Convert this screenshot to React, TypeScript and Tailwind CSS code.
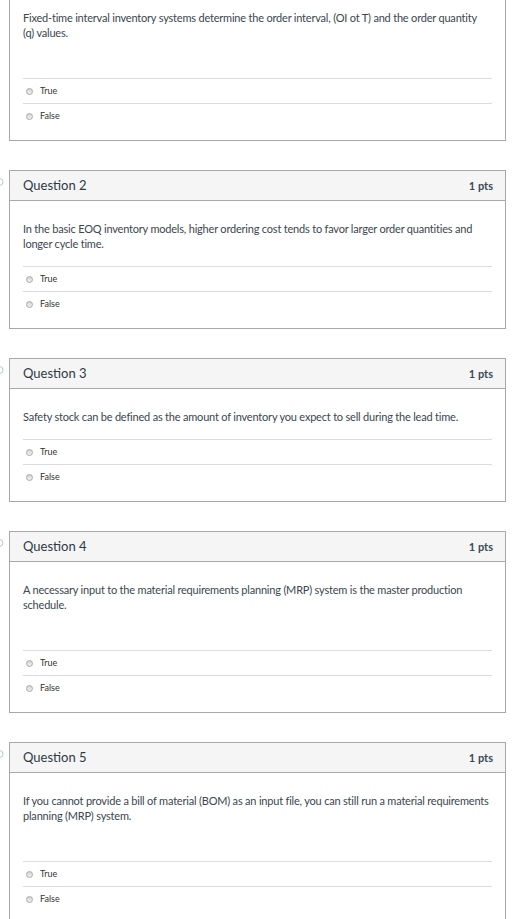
import React from 'react';

interface Question {
  number?: number;
  text: string;
  extraSpace: boolean;
}

const questions: Question[] = [
  {
    text: 'Fixed-time interval inventory systems determine the order interval, (OI ot T) and the order quantity (q) values.',
    extraSpace: true,
  },
  {
    number: 2,
    text: 'In the basic EOQ inventory models, higher ordering cost tends to favor larger order quantities and longer cycle time.',
    extraSpace: false,
  },
  {
    number: 3,
    text: 'Safety stock can be defined as the amount of inventory you expect to sell during the lead time.',
    extraSpace: false,
  },
  {
    number: 4,
    text: 'A necessary input to the material requirements planning (MRP) system is the master production schedule.',
    extraSpace: true,
  },
  {
    number: 5,
    text: 'If you cannot provide a bill of material (BOM) as an input file, you can still run a material requirements planning (MRP) system.',
    extraSpace: true,
  },
];

function Radio() {
  return (
    <span className="inline-block w-[7px] h-[7px] rounded-full border border-[#a9a9a9] bg-gradient-to-b from-[#d4d4d4] to-[#f2f2f2]" />
  );
}

function Answer({ label }: { label: string }) {
  return (
    <div className="h-[25px] border-t border-[#dcdcdc] flex items-center pl-[3px] gap-[7px]">
      <Radio />
      <span className="text-[9px] text-[#333]">{label}</span>
    </div>
  );
}

function QuestionCard({ q }: { q: Question }) {
  const hasHeader = q.number !== undefined;
  return (
    <div className="flex">
      {/* flag marker at left edge */}
      <div className="w-[9px] shrink-0">
        {hasHeader && (
          <svg width="9" height="20" viewBox="0 0 9 20" className="mt-[7px]">
            <circle cx="-0.5" cy="5" r="3.5" fill="none" stroke="#b9c6d2" strokeWidth="1" />
          </svg>
        )}
      </div>
      <div
        className={`w-[497px] border-[#a8a8a8] ${hasHeader ? 'border' : 'border-x border-b'}`}
      >
        {hasHeader && (
          <div className="h-[30px] bg-[#f5f5f5] border-b border-[#a8a8a8] flex items-center justify-between px-[12px] pl-[13px]">
            <span className="text-[13px] text-[#2d3b45] leading-none">Question {q.number}</span>
            <span className="text-[11px] font-bold text-[#3b4a55] leading-none">1 pts</span>
          </div>
        )}
        <div className={`px-[13px] pb-[12px] ${hasHeader ? 'pt-[20px]' : 'pt-[10px]'}`}>
          <p
            className={`text-[11px] leading-[15px] text-[#3a4650] tracking-[-0.2px] pr-[2px] ${
              q.extraSpace ? 'mb-[38px]' : 'mb-[15px]'
            }`}
          >
            {q.text}
          </p>
          <Answer label="True" />
          <Answer label="False" />
        </div>
      </div>
    </div>
  );
}

export default function App() {
  return (
    <div className="min-h-screen bg-white font-['Lato','Noto_Sans',sans-serif] overflow-hidden">
      <div className="flex flex-col gap-[29px]">
        {questions.map((q, i) => (
          <QuestionCard key={i} q={q} />
        ))}
      </div>
    </div>
  );
}
